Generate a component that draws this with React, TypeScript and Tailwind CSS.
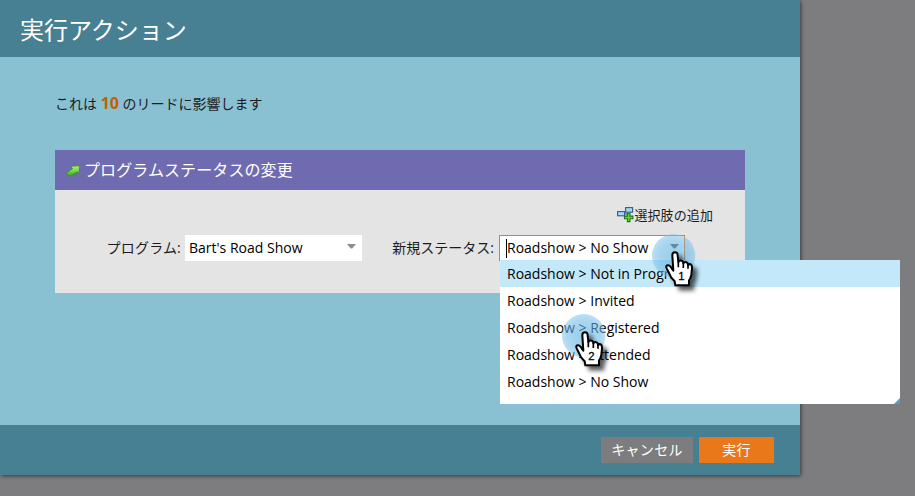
import React from "react";

const jp = "font-['Open_Sans','Noto_Sans_CJK_JP',sans-serif]";

function Pointer({ n, className }: { n: number; className: string }) {
  const id = `shadow${n}`;
  return (
    <svg className={`absolute z-20 pointer-events-none ${className}`} width="70" height="75" viewBox="0 0 210 225">
      <defs>
        <filter id={id} x="-30%" y="-30%" width="180%" height="180%">
          <feDropShadow dx="13" dy="13" stdDeviation="7" floodColor="#000" floodOpacity="0.65" />
        </filter>
        <radialGradient id={`${id}g`}>
          <stop offset="0" stopColor="#5aaede" stopOpacity="0.62" />
          <stop offset="0.7" stopColor="#68b6e4" stopOpacity="0.57" />
          <stop offset="1" stopColor="#7cc3ec" stopOpacity="0.52" />
        </radialGradient>
      </defs>
      <circle cx="101" cy="92" r="65" fill={`url(#${id}g)`} />
      <g filter={`url(#${id})`}>
        <path
          d="M97 91 Q97 82 105 82 Q113 82 113 91 L115 111 Q118 105 125 107 Q130 108 130 115 Q134 109 140 112 Q144 114 144 120 Q149 115 153 119 Q156 121 156 130 L154 149 Q152 160 147 166 L147 181 L106 181 L104 169 Q91 157 87 144 L80 130 Q76 121 84 121 Q90 121 95 130 L100 137 Z"
          fill="#fff"
          stroke="#000"
          strokeWidth="6"
          strokeLinejoin="round"
        />
      </g>
      <path d="M115 109V127M130 113V129M144 119V131" stroke="#000" strokeWidth="5" />
      <text x="124" y="164" textAnchor="middle" fontFamily="Liberation Sans, sans-serif" fontSize="34" stroke="#000" strokeWidth="0.8">
        {n}
      </text>
    </svg>
  );
}

function Caret({ className = "fill-[#8d8d8d]" }: { className?: string }) {
  return (
    <svg width="9" height="5" viewBox="0 0 9 5" className={`mb-[3px] shrink-0 ${className}`}>
      <path d="M0 0H9L5.2 4.6H3.8Z" />
    </svg>
  );
}

function ArrowIcon() {
  return (
    <svg width="14" height="12" viewBox="0 0 14 12" className="mt-[2px] shrink-0">
      <defs>
        <linearGradient id="green" x1="0" y1="0" x2="0" y2="1">
          <stop offset="0" stopColor="#b4f07c" />
          <stop offset="0.55" stopColor="#6ad83b" />
          <stop offset="1" stopColor="#3fa51e" />
        </linearGradient>
      </defs>
      <path d="M4.6 1.3L13.4 .8L13.2 8.2L10.9 6.9L4.6 10.9Q2.5 11.6 1.3 10Q.2 8.2 1.2 7.4L6.6 3.6Z" fill="url(#green)" stroke="#3b8b2b" strokeWidth=".8" />
    </svg>
  );
}

function AddChoiceIcon() {
  return (
    <svg width="17" height="16" viewBox="0 0 17 16" className="shrink-0">
      <path d="M6 7H10" stroke="#36597c" />
      <rect x=".6" y="4.6" width="7" height="4.2" fill="#a7d5f3" stroke="#2b5f88" strokeWidth="1.1" />
      <rect x="8.6" y=".6" width="7" height="4.6" fill="#a7d5f3" stroke="#2b5f88" strokeWidth="1.1" />
      <path d="M10.4 6.2h2.6v2.9h2.9v2.6h-2.9v2.9h-2.6v-2.900H7.5V9.100h2.9z" fill="#65d037" stroke="#24761b" strokeWidth="1.1" />
    </svg>
  );
}

const statuses = ["Not in Program", "Invited", "Registered", "Attended", "No Show"];

export default function App() {
  return (
    <div className={`relative h-[496px] w-[915px] overflow-hidden bg-[#7d7d7f] text-[14px] text-[#1c1c1c] ${jp}`}>
      <div className="flex h-[475px] w-[800px] flex-col bg-[#89c1d3] shadow-[1px_1px_4px_rgba(0,0,0,0.55)]">
        <header className="flex h-[57px] shrink-0 items-center bg-[#468092] pl-5 pt-[3px] text-[24px] leading-none text-white">
          実行アクション
        </header>
        <main className="flex-1 px-[55px] pt-[33px]">
          <p className="h-[27px] leading-[27px] whitespace-pre">
            これは <b className="text-[16px] text-[#c45f00]">10</b> のリードに影響します
          </p>
          <section className="mt-[33px] h-[143px] bg-[#e4e4e4]">
            <h2 className="flex h-10 items-center bg-[#6f6bb0] pl-[11px] text-[16px] text-white">
              <ArrowIcon />
              <span className="ml-[4px] leading-none tracking-[0.1px]">プログラムステータスの変更</span>
            </h2>
            <div className="flex h-[45px] items-center justify-end pr-8 pt-[5px]">
              <AddChoiceIcon />
              <span className="text-[13px] leading-none tracking-[0.1px]">選択肢の追加</span>
            </div>
            <div className="flex h-[26px] items-center">
              <span className="w-[126px] pb-[2px] text-right tracking-[0.2px]">プログラム:</span>
              <div className="ml-1 flex h-[26px] w-[177px] items-center justify-between bg-white pl-1 pr-[6px] text-black">
                <span className="pb-[2px]">Bart's Road Show</span>
                <Caret />
              </div>
              <span className="w-[132px] pb-[2px] text-right">新規ステータス:</span>
              <div className="ml-[5px] flex h-[26px] w-[186px] items-center border border-[#e8781e] bg-white pl-[6px] pr-[5px] text-black">
                <i className="h-[19px] w-px bg-black" />
                <span className="flex-1 pb-[2px]">Roadshow &gt; No Show</span>
                <Caret className="fill-[#555]" />
              </div>
            </div>
          </section>
        </main>
        <footer className="flex h-[50px] shrink-0 items-center justify-end gap-[6px] bg-[#468092] pr-[26px] text-white">
          <button className="h-[26px] w-[92px] bg-[#7d7d7f] leading-[26px] tracking-[0.3px]">キャンセル</button>
          <button className="h-[26px] w-[75px] bg-[#e8781a] leading-[26px] tracking-[0.3px]">実行</button>
        </footer>
      </div>
      <div className="absolute left-[500px] top-[260px] z-10 h-[144px] w-[400px] bg-white text-black">
        {statuses.map((s, i) => (
          <div key={s} className={`h-[27px] pl-[7px] leading-[27px] ${i === 0 ? "bg-[#c2e8fa]" : ""}`}>
            Roadshow &gt; {s}
          </div>
        ))}
        <svg width="6" height="6" className="absolute bottom-0 right-0">
          <path d="M6 0V6H0Z" fill="#4f9fc6" />
        </svg>
      </div>
      <Pointer n={1} className="left-[640px] top-[225px]" />
      <Pointer n={2} className="left-[550px] top-[305px]" />
    </div>
  );
}
